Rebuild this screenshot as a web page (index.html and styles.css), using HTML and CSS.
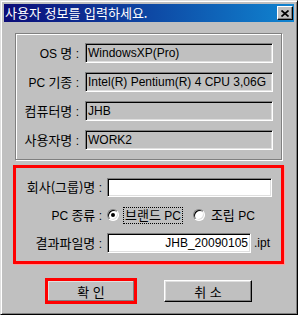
FILE: index.html
```html
<!DOCTYPE html>
<html lang="ko">
<head>
    <meta charset="UTF-8">
    <title>사용자 정보를 입력하세요.</title>
    <link rel="stylesheet" href="styles.css">
</head>
<body>
    <div class="window">
        <div class="titlebar">
            <span class="title ko">사용자 정보를 입력하세요.</span>
            <button class="close-btn" type="button">
                <svg width="8" height="7" viewBox="0 0 8 7"><path d="M0.5 0.5L7.5 6.5M7.5 0.5L0.5 6.5" stroke="#000" stroke-width="1.7"/></svg>
            </button>
        </div>

        <div class="group info-group">
            <label class="row-label">OS <span class="ko">명</span> :</label>
            <div class="field readonly">WindowsXP(Pro)</div>
            <label class="row-label">PC <span class="ko">기종</span> :</label>
            <div class="field readonly">Intel(R) Pentium(R) 4 CPU 3,06G</div>
            <label class="row-label"><span class="ko">컴퓨터명</span> :</label>
            <div class="field readonly">JHB</div>
            <label class="row-label"><span class="ko">사용자명</span> :</label>
            <div class="field readonly">WORK2</div>
        </div>

        <div class="group input-group">
            <label class="row-label"><span class="ko">회사(그룹)명</span> :</label>
            <div class="field edit wide"></div>
            <label class="row-label">PC <span class="ko">종류</span> :</label>
            <div class="radios">
                <span class="radio checked"></span>
                <span class="radio-text focused"><span class="ko">브랜드</span> PC</span>
                <span class="radio"></span>
                <span class="radio-text"><span class="ko">조립</span> PC</span>
            </div>
            <label class="row-label"><span class="ko">결과파일명</span> :</label>
            <div class="file-row">
                <div class="field edit short">JHB_20090105</div>
                <span class="ext">.ipt</span>
            </div>
        </div>

        <div class="buttons">
            <button class="btn btn-ok ko" type="button">확 인</button>
            <button class="btn ko" type="button">취 소</button>
        </div>
    </div>
</body>
</html>
```
FILE: styles.css
```css
body {
    margin: 0;
    font-family: "Liberation Sans", "Noto Sans CJK KR", sans-serif;
    font-size: 12px;
    color: #000;
}
.ko {
    font-family: "Noto Sans CJK KR", sans-serif;
    font-size: 13px;
}
.window {
    width: 298px;
    height: 315px;
    box-sizing: border-box;
    background: #c0c0c0;
    border: 1px solid;
    border-color: #dfdfdf #000 #000 #dfdfdf;
    box-shadow: inset 1px 1px #fff, inset -1px -1px #808080;
    padding: 3px;
}
.titlebar {
    height: 18px;
    background: linear-gradient(to right, #0c0c78, #1084d0);
    display: flex;
    align-items: center;
    justify-content: space-between;
    padding: 0 1px;
    color: #fff;
}
.title {
    line-height: 18px;
}
.close-btn {
    width: 16px;
    height: 14px;
    padding: 0;
    box-sizing: border-box;
    background: #c0c0c0;
    border: 1px solid;
    border-color: #fff #000 #000 #fff;
    box-shadow: inset -1px -1px #808080;
    display: flex;
    align-items: center;
    justify-content: center;
}
.group {
    box-sizing: border-box;
    display: grid;
    align-items: center;
}
.info-group {
    margin: 11px 0 0 11px;
    width: 267px;
    height: 127px;
    border: 1px solid #808080;
    box-shadow: 1px 1px 0 #fff, inset 1px 1px 0 #fff;
    grid-template-columns: 63px 188px;
    grid-template-rows: repeat(4, 20px);
    column-gap: 6px;
    row-gap: 9px;
    padding-top: 9px;
    align-content: start;
}
.input-group {
    margin: 5px 0 0 9px;
    width: 271px;
    height: 99px;
    border: 3px solid #ff0000;
    box-shadow: 1px 1px 0 #ff9a9a;
    grid-template-columns: 86px 165px;
    grid-template-rows: 19px 20px 20px;
    column-gap: 5px;
    row-gap: 8px;
    padding-top: 10px;
    align-content: start;
}
.row-label {
    text-align: right;
    white-space: nowrap;
    line-height: 16px;
}
.field {
    height: 100%;
    box-sizing: border-box;
    border: 1px solid;
    border-color: #808080 #fff #fff #808080;
    box-shadow: inset 1px 1px #000, inset -1px -1px #dfdfdf;
    padding: 0 2px 0 2px;
    display: flex;
    align-items: center;
    white-space: nowrap;
    overflow: hidden;
}
.readonly {
    background: #c0c0c0;
}
.edit {
    background: #fff;
}
.short {
    width: 144px;
    justify-content: flex-end;
}
.radios {
    display: flex;
    align-items: center;
    height: 100%;
}
.radio {
    width: 12px;
    height: 12px;
    box-sizing: border-box;
    border-radius: 50%;
    background: #fff;
    border: 1px solid;
    border-color: #808080 #fff #fff #808080;
    box-shadow: inset 1px 1px #000, inset -1px -1px #dfdfdf;
    display: flex;
    align-items: center;
    justify-content: center;
}
.radio.checked::after {
    content: "";
    width: 4px;
    height: 4px;
    border-radius: 50%;
    background: #000;
}
.radio-text {
    margin-left: 4px;
    margin-right: 10px;
    padding: 0 1px;
    line-height: 14px;
    border: 1px solid transparent;
    white-space: nowrap;
}
.radio-text.focused {
    border: 1px dotted #000;
}
.file-row {
    display: flex;
    align-items: center;
    height: 100%;
}
.ext {
    margin-left: 3px;
}
.buttons {
    display: flex;
    gap: 29px;
    margin: 16px 0 0 43px;
}
.btn {
    width: 88px;
    height: 22px;
    padding: 0;
    box-sizing: border-box;
    background: #c0c0c0;
    color: #000;
    border: 1px solid;
    border-color: #fff #000 #000 #fff;
    box-shadow: inset -1px -1px #808080, inset 1px 1px #dfdfdf;
}
.btn-ok {
    outline: 3px solid #ff0000;
    outline-offset: -1px;
}
```
